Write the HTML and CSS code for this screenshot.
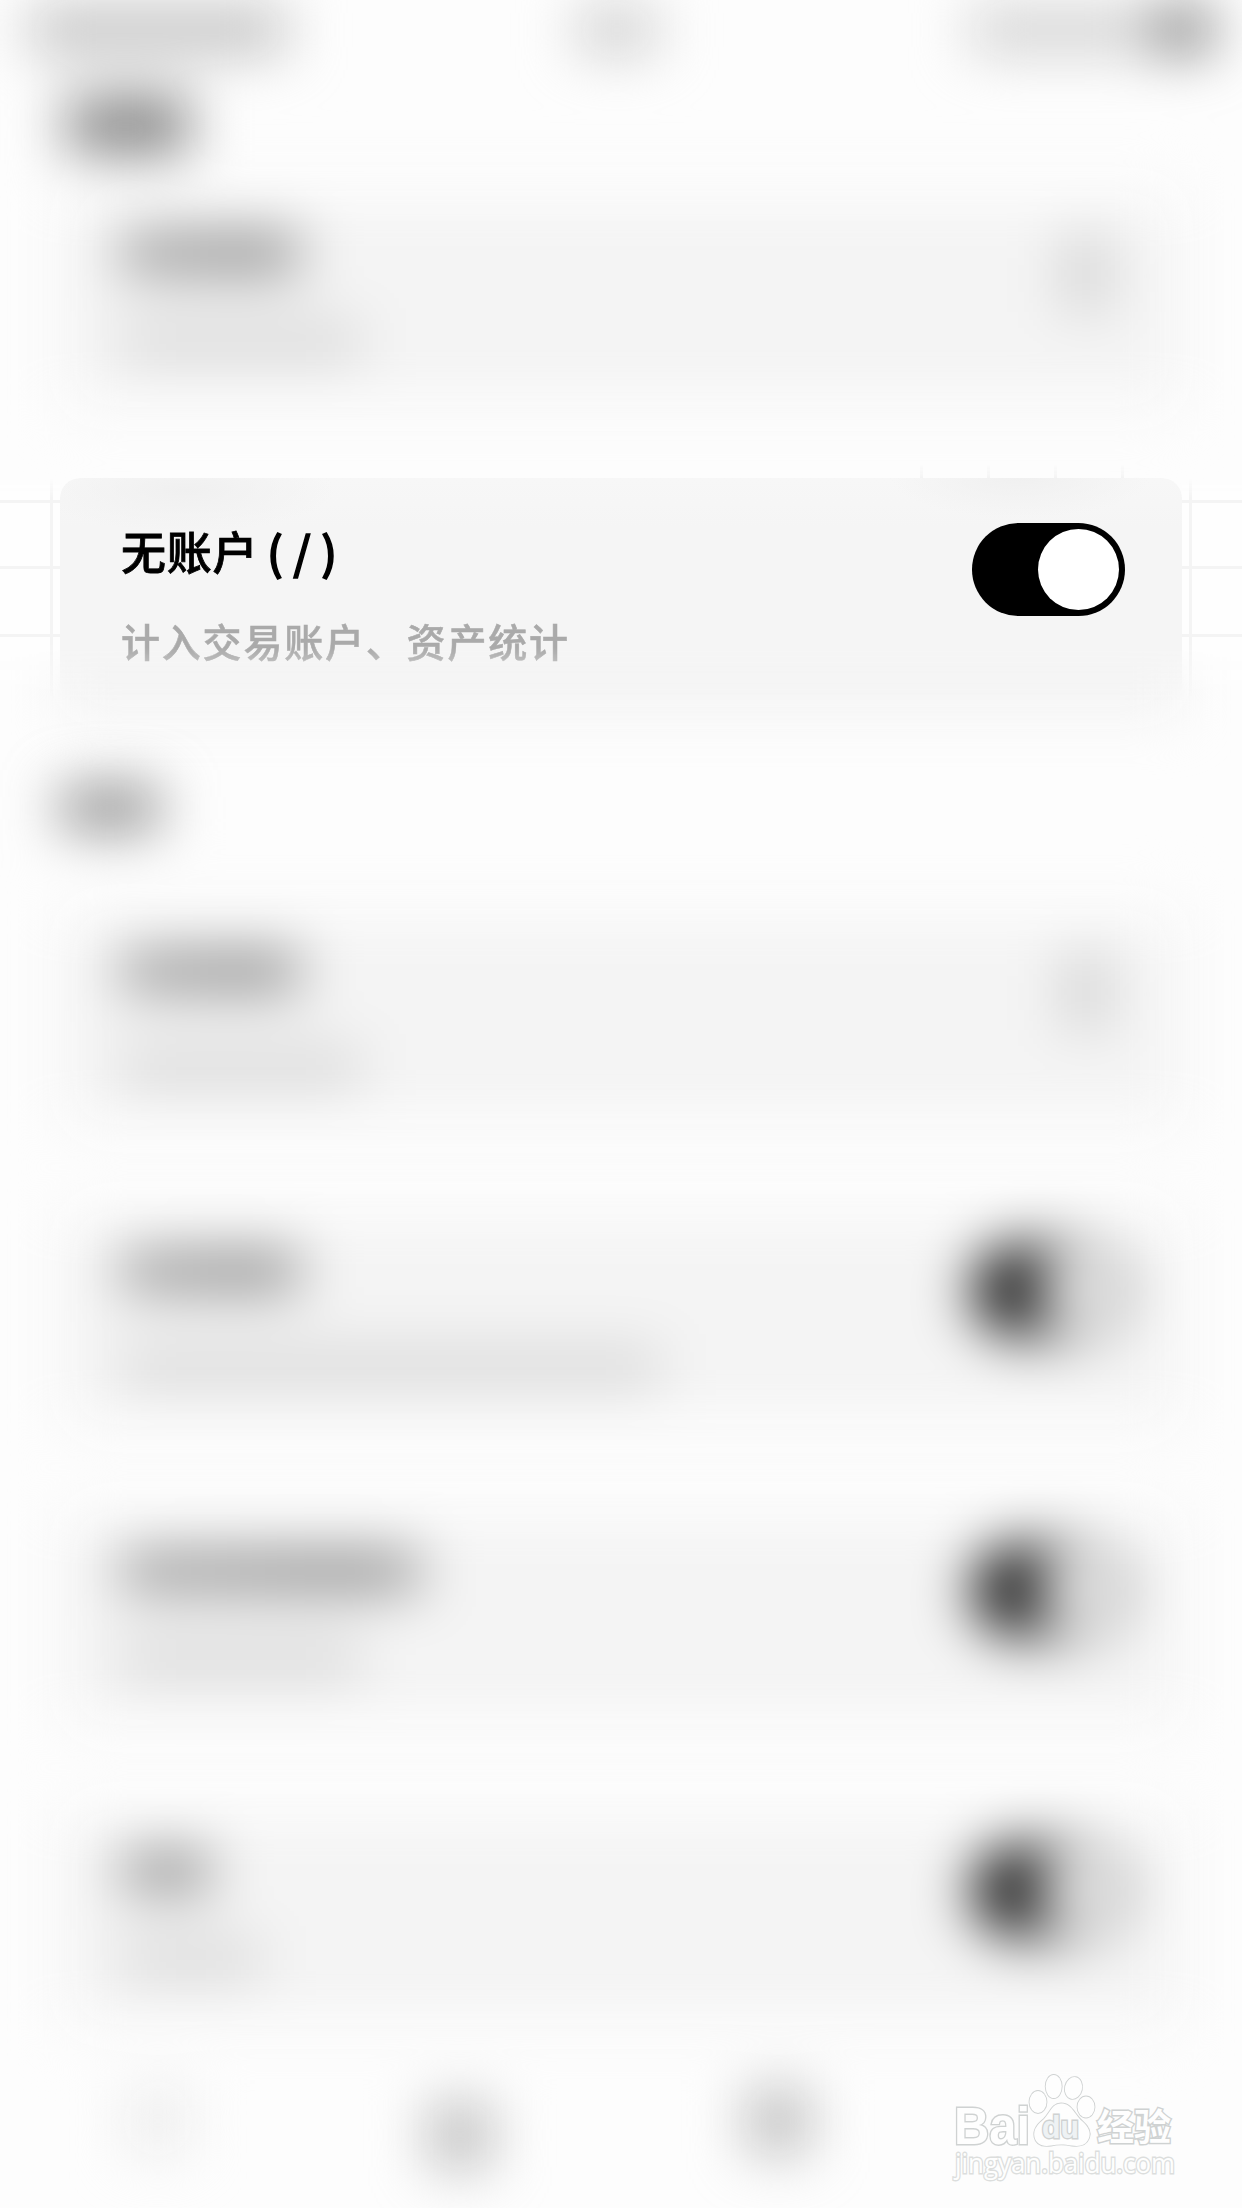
FILE: index.html
```
<!DOCTYPE html>
<html lang="zh-CN">
<head>
<meta charset="utf-8">
<title>无账户</title>
<link rel="stylesheet" href="styles.css">
</head>
<body>
<main class="screen">
  <div class="soft">
    <div class="status">
      <i class="bar carrier"></i><i class="bar clock"></i>
      <div class="indicators"><i class="bar signal"></i><i class="bar battery"></i></div>
    </div>
    <div class="page-title"><i class="bar"></i></div>
    <section class="card">
      <div class="lines"><i class="bar name w-180"></i><i class="bar note w-240"></i></div>
      <i class="bar arrow"></i>
    </section>
  </div>

  <div class="focus">
    <i class="grid-side"></i>
    <section class="card spotlight">
      <div class="copy">
        <h1>无账户<span class="slash">( / )</span></h1>
        <p>计入交易账户、资产统计</p>
      </div>
      <i class="toggle"></i>
    </section>
    <i class="grid-side right"></i>
    <i class="ticks"></i>
  </div>

  <div class="soft">
    <div class="section-title"><i class="bar"></i></div>
    <div class="list">
      <section class="card">
        <div class="lines roomy"><i class="bar name w-180"></i><i class="bar note w-240"></i></div>
        <i class="bar arrow"></i>
      </section>
      <section class="card">
        <div class="lines roomy"><i class="bar name w-180"></i><i class="bar note w-540"></i></div>
        <i class="toggle"></i>
      </section>
      <section class="card">
        <div class="lines"><i class="bar name w-300"></i><i class="bar note w-240"></i></div>
        <i class="toggle"></i>
      </section>
      <section class="card">
        <div class="lines"><i class="bar name w-90"></i><i class="bar note w-140"></i></div>
        <i class="toggle"></i>
      </section>
    </div>
    <nav class="tabs"><i class="bar faint"></i><i class="bar low"></i><i class="bar"></i></nav>
  </div>

  <svg class="watermark" viewBox="0 0 260 128" width="260" height="128">
    <g class="mark">
      <text class="latin" x="14" y="64" textLength="76" lengthAdjust="spacingAndGlyphs">Bai</text>
      <ellipse cx="98" cy="22" rx="8.5" ry="11"/>
      <ellipse cx="113.7" cy="6.5" rx="8" ry="11.5"/>
      <ellipse cx="133.5" cy="8" rx="8.5" ry="11" transform="rotate(12 133.5 8)"/>
      <ellipse cx="146" cy="27" rx="8.5" ry="10.5"/>
      <path d="M121 23.500C132 23.500 134 34 142 41C149 47 151 53 149 58C146 66 139 66.500 132 65.500C124 64 118 64 111 65.500C102 67 96 64 94.500 57C93 49 98 44 104 39C110 33 112 23.500 121 23.500Z"/>
      <text class="du" x="102" y="58" textLength="37" lengthAdjust="spacingAndGlyphs">du</text>
      <text class="han" x="157" y="61" textLength="74" lengthAdjust="spacingAndGlyphs">经验</text>
      <text class="site" x="15" y="93" textLength="220" lengthAdjust="spacingAndGlyphs">jingyan.baidu.com</text>
    </g>
  </svg>
</main>
</body>
</html>
```
FILE: styles.css
```
* { box-sizing: border-box; }
body {
  margin: 0;
  background: #fdfdfd;
  font-family: "Noto Sans CJK SC", sans-serif;
}
.screen {
  position: relative;
  width: 1242px;
  height: 2208px;
  overflow: hidden;
}
.soft { filter: blur(28px); }
.bar { display: block; background: #8f8f8f; }

.status {
  height: 60px;
  padding: 8px 30px 0;
  display: flex;
  justify-content: space-between;
}
.status .bar { height: 44px; background: #bdbdbd; }
.status .carrier { width: 256px; }
.status .clock { width: 80px; margin-right: 22px; background: #cbcbcb; }
.indicators { display: flex; gap: 4px; }
.status .signal { width: 180px; background: #d0d0d0; }
.status .battery { width: 58px; background: #777; }

.page-title { height: 119px; padding: 38px 66px 0; }
.page-title .bar { width: 122px; height: 54px; background: linear-gradient(90deg, #868686, #737373); }

.card {
  height: 240px;
  margin: 0 60px;
  padding: 45px 57px 0 61px;
  display: flex;
  justify-content: space-between;
  align-items: flex-start;
  background: linear-gradient(#fdfdfd, #f4f4f4 50px, #f4f4f4 190px, #fbfbfb);
}
.soft .card { padding-top: 47px; }
.lines { padding-top: 8px; display: grid; gap: 52px; }
.lines.roomy { gap: 60px; }
.name { height: 38px; background: linear-gradient(90deg, #979797, #858585 75%, #979797); }
.note { height: 34px; background: #d4d4d4; }
.w-90 { width: 90px; }
.w-140 { width: 140px; }
.w-180 { width: 180px; }
.w-240 { width: 240px; }
.w-300 { width: 300px; }
.w-540 { width: 540px; }
.arrow { width: 46px; height: 78px; margin: 8px 16px 0; background: #d3d3d3; }

.toggle {
  width: 153px;
  height: 93px;
  padding: 6px;
  border-radius: 47px;
  background: #000;
  display: flex;
  justify-content: flex-end;
}
.toggle::after {
  content: "";
  width: 81px;
  height: 81px;
  border-radius: 50%;
  background: #fff;
}
.soft .toggle { background: #1a1a1a; }
.soft .toggle::after { background: #f1f1f1; }

.focus {
  position: relative;
  margin-top: 59px;
  height: 240px;
  display: flex;
}
.focus::before {
  content: "";
  position: absolute;
  inset: 130px 60px 0;
  background: #f4f4f4;
  filter: blur(26px);
}
.spotlight {
  position: relative;
  flex: 1;
  margin: 0;
  border-radius: 20px 20px 0 0;
  background: radial-gradient(ellipse 150px 42px at 125px 12px, #f0f0f0, transparent),
    radial-gradient(ellipse 130px 40px at 960px 0, #f0f0f0, transparent),
    linear-gradient(#f7f7f7, #f5f5f5 50px, #f5f5f5);
  -webkit-mask-image: linear-gradient(#000 170px, transparent 225px);
  mask-image: linear-gradient(#000 170px, transparent 225px);
}
.copy h1 {
  margin: -6px 0 0;
  height: 68px;
  font-size: 45px;
  line-height: 68px;
  font-weight: 500;
  letter-spacing: 0.7px;
  color: #000;
  -webkit-text-stroke: 0.8px #000;
  white-space: nowrap;
}
.slash { margin-left: 9px; letter-spacing: 0; -webkit-text-stroke: 1.5px #000; }
.copy p {
  margin: 25px 0 0;
  font-size: 39px;
  line-height: 60px;
  font-weight: 500;
  letter-spacing: 1.8px;
  color: #aaa;
  -webkit-text-stroke: 0.5px #aaa;
}
.grid-side {
  position: relative;
  width: 60px;
  background: linear-gradient(#f4f4f4, #f4f4f4) 50px 0 / 3px 100% no-repeat,
    linear-gradient(#f4f4f4, #f4f4f4) 0 22px / 100% 3px no-repeat,
    linear-gradient(#f4f4f4, #f4f4f4) 0 88px / 100% 3px no-repeat,
    linear-gradient(#f4f4f4, #f4f4f4) 0 156px / 100% 3px no-repeat, #fefefe;
  -webkit-mask-image: linear-gradient(transparent, #000 20px, #000 165px, transparent 220px);
  mask-image: linear-gradient(transparent, #000 20px, #000 165px, transparent 220px);
}
.grid-side.right { transform: scaleX(-1); }
.ticks {
  position: absolute;
  left: 920px;
  top: -14px;
  width: 210px;
  height: 14px;
  background: repeating-linear-gradient(90deg, #f4f4f4 0 3px, transparent 3px 67px);
  -webkit-mask-image: linear-gradient(transparent, #000);
  mask-image: linear-gradient(transparent, #000);
}

.section-title { height: 179px; padding: 70px 61px 0; }
.section-title .bar { width: 98px; height: 40px; background: #808080; }
.list { display: grid; gap: 60px; }
.tabs {
  height: 171px;
  padding: 52px 0 0 128px;
  display: grid;
  grid-template-columns: 302px 318px 1fr;
}
.tabs .bar { width: 60px; height: 64px; background: #b9b9b9; }
.tabs .faint { background: #ececec; }
.tabs .low { margin-top: 14px; }

.watermark {
  position: absolute;
  left: 940px;
  top: 2080px;
  overflow: visible;
}
.mark { fill: #fefefe; stroke: #cfd2d2; stroke-width: 1.8px; paint-order: stroke; }
.mark text { stroke-width: 2.8px; }
.mark .latin { font: bold 51px "Liberation Sans", sans-serif; }
.mark .du { font: bold 31px "Liberation Sans", sans-serif; fill: #eef2f4; }
.mark .han { font: 700 37px "Noto Sans CJK SC", sans-serif; }
.mark .site { font: 28px "Open Sans", sans-serif; stroke: #dcdedd; }
```
